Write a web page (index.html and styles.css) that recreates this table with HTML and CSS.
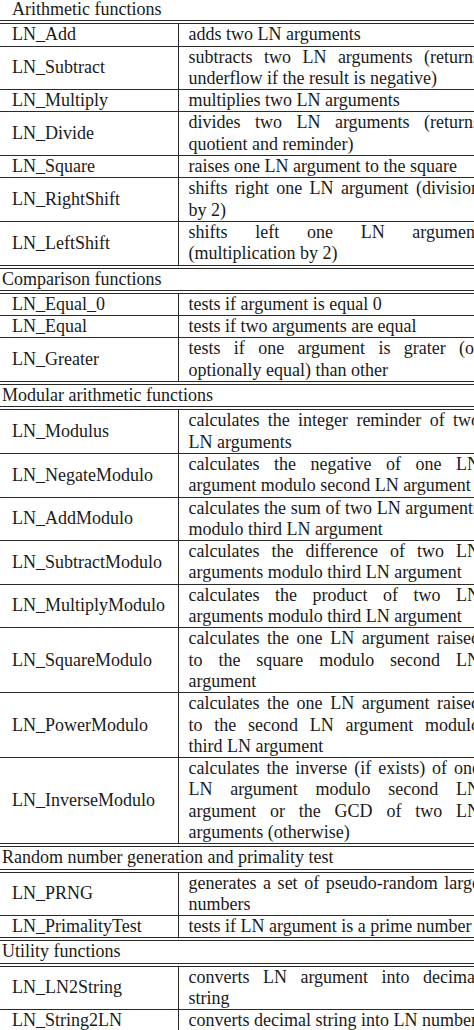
FILE: index.html
```html
<!DOCTYPE html>
<html>
<head>
<meta charset="utf-8">
<link rel="stylesheet" href="styles.css">
</head>
<body>
<table class="fn-table">
  <colgroup><col class="col-name"><col class="col-desc"></colgroup>
  <tr class="sec first"><td colspan="2" class="sec-title indent">Arithmetic functions</td></tr>
  <tr><td class="name">LN_Add</td><td class="desc">adds two LN arguments</td></tr>
  <tr><td class="name">LN_Subtract</td><td class="desc">subtracts two LN arguments (returns underflow if the result is negative)</td></tr>
  <tr><td class="name">LN_Multiply</td><td class="desc">multiplies two LN arguments</td></tr>
  <tr><td class="name">LN_Divide</td><td class="desc">divides two LN arguments (returns quotient and reminder)</td></tr>
  <tr><td class="name">LN_Square</td><td class="desc">raises one LN argument to the square</td></tr>
  <tr><td class="name">LN_RightShift</td><td class="desc">shifts right one LN argument (division by 2)</td></tr>
  <tr><td class="name">LN_LeftShift</td><td class="desc">shifts left one LN argument (multiplication by 2)</td></tr>
  <tr class="sec"><td colspan="2" class="sec-title">Comparison functions</td></tr>
  <tr><td class="name">LN_Equal_0</td><td class="desc">tests if argument is equal 0</td></tr>
  <tr><td class="name">LN_Equal</td><td class="desc">tests if two arguments are equal</td></tr>
  <tr><td class="name">LN_Greater</td><td class="desc">tests if one argument is grater (or optionally equal) than other</td></tr>
  <tr class="sec"><td colspan="2" class="sec-title">Modular arithmetic functions</td></tr>
  <tr><td class="name">LN_Modulus</td><td class="desc">calculates the integer reminder of two LN arguments</td></tr>
  <tr><td class="name">LN_NegateModulo</td><td class="desc">calculates the negative of one LN argument modulo second LN argument</td></tr>
  <tr><td class="name">LN_AddModulo</td><td class="desc">calculates the sum of two LN arguments modulo third LN argument</td></tr>
  <tr><td class="name">LN_SubtractModulo</td><td class="desc">calculates the difference of two LN arguments modulo third LN argument</td></tr>
  <tr><td class="name">LN_MultiplyModulo</td><td class="desc">calculates the product of two LN arguments modulo third LN argument</td></tr>
  <tr><td class="name">LN_SquareModulo</td><td class="desc">calculates the one LN argument raised to the square modulo second LN argument</td></tr>
  <tr><td class="name">LN_PowerModulo</td><td class="desc">calculates the one LN argument raised to the second LN argument modulo third LN argument</td></tr>
  <tr><td class="name">LN_InverseModulo</td><td class="desc">calculates the inverse (if exists) of one LN argument modulo second LN argument or the GCD of two LN arguments (otherwise)</td></tr>
  <tr class="sec"><td colspan="2" class="sec-title">Random number generation and primality test</td></tr>
  <tr><td class="name">LN_PRNG</td><td class="desc">generates a set of pseudo-random large numbers</td></tr>
  <tr><td class="name">LN_PrimalityTest</td><td class="desc">tests if LN argument is a prime number</td></tr>
  <tr class="sec"><td colspan="2" class="sec-title">Utility functions</td></tr>
  <tr><td class="name">LN_LN2String</td><td class="desc">converts LN argument into decimal string</td></tr>
  <tr><td class="name">LN_String2LN</td><td class="desc">converts decimal string into LN number</td></tr>
</table>
</body>
</html>
```
FILE: styles.css
```css
html, body {
  margin: 0;
  padding: 0;
  background: #ffffff;
  overflow: hidden;
}
body {
  width: 474px;
  height: 1030px;
}
.fn-table {
  border-collapse: collapse;
  margin-top: -1px;
  font-family: "Liberation Serif", "Times New Roman", serif;
  font-size: 18px;
  line-height: 21.3px;
  color: #1a1a1a;
  width: 480px;
  table-layout: fixed;
}
.col-name { width: 178px; }
.col-desc { width: 302px; }
.fn-table td {
  padding: 0;
  border-top: 1px solid #2a2a2a;
  vertical-align: middle;
}
.name {
  padding-left: 12px !important;
  border-right: 1px solid #2a2a2a;
}
.desc {
  padding-left: 10px !important;
  text-align: justify;
}
.sec-title {
  padding-left: 2px !important;
  border-top: 4px double #2a2a2a !important;
  border-bottom: 4px double #2a2a2a;
}
.sec-title.indent {
  padding-left: 12px !important;
  border-top: none !important;
}
```
